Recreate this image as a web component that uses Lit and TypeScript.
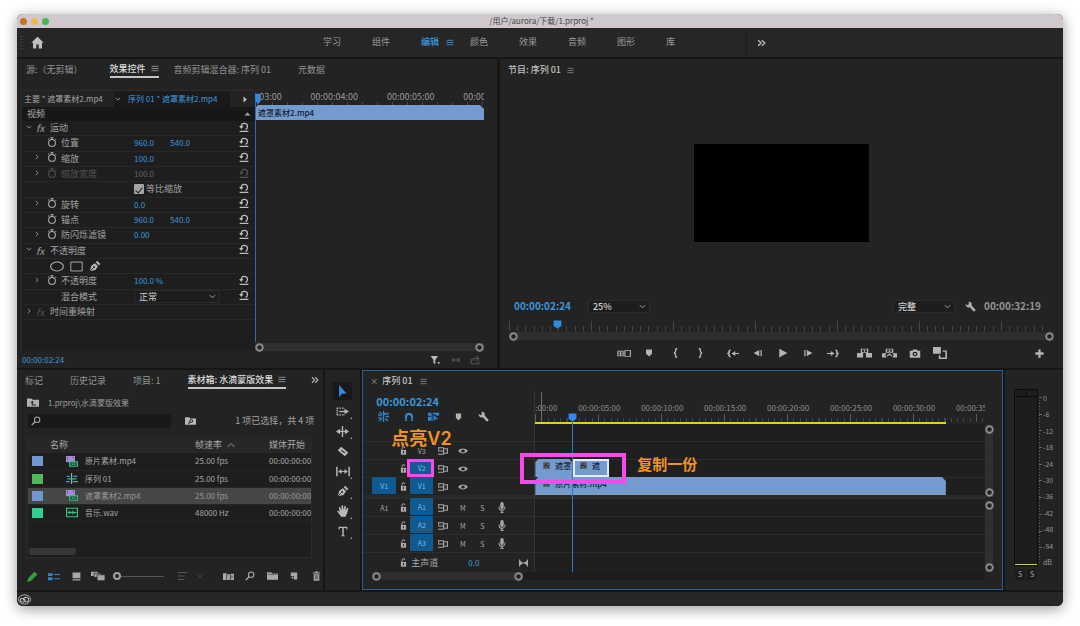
import { LitElement, html, svg, css, nothing } from "lit";
import { customElement } from "lit/decorators.js";
import { classMap } from "lit/directives/class-map.js";

/* ---------- icons ---------- */

const shapes: Record<string, any> = {
  home: svg`<path d="M8 1 .3 8.300h2.200V15.500h4v-5h3v5h4V8.300h2.200z" fill="currentColor"/>`,
  menu: svg`<path d="M1 3h14M1 8h14M1 13h14" stroke="currentColor" stroke-width="1.800"/>`,
  more: svg`<path d="M2 2.500 7.500 8 2 13.500M8.500 2.500 14 8l-5.500 5.500" fill="none" stroke="currentColor" stroke-width="2.200"/>`,
  down: svg`<path d="m2 5 6 6 6-6" fill="none" stroke="currentColor" stroke-width="2.200"/>`,
  up: svg`<path d="m1 12 7-7 7 7" fill="none" stroke="currentColor" stroke-width="1.800"/>`,
  right: svg`<path d="m5 2 6 6-6 6" fill="none" stroke="currentColor" stroke-width="2.200"/>`,
  triRight: svg`<path d="M4 1v14l9-7z" fill="currentColor"/>`,
  triUp: svg`<path d="M1 12h14L8 4z" fill="currentColor"/>`,
  watch: svg`<circle cx="8" cy="9.500" r="5.400" fill="none" stroke="currentColor" stroke-width="1.700"/><path d="M5.500 1.200h5M8 1.200V4M1.500 3.800l2-1.300M13 3l1.500 1.500" stroke="currentColor" stroke-width="1.600"/>`,
  reset: svg`<path d="M3.500 8C3.500 4 5.800 2.200 8.500 2.200S13.500 4 13.500 7c0 2-1 3.800-3 4.800M1 14.800h14" fill="none" stroke="currentColor" stroke-width="2"/><path d="M.2 6.300h7L3.600 11z" fill="currentColor"/>`,
  ellipse: svg`<ellipse cx="8" cy="8" rx="7.300" ry="6.500" fill="none" stroke="currentColor" stroke-width="1.200"/>`,
  rect: svg`<path d="M1 1.500h14v13H1z" fill="none" stroke="currentColor" stroke-width="1.200"/>`,
  pen: svg`<path d="m1 15 2-7.500 5-3.300 4 4-3.300 5zM9 3l2-2 4.200 4.200-2 2z" fill="currentColor"/><path d="m1.500 14.500 4.700-4.700" stroke="#1e1e1e" stroke-width="1.200"/><circle cx="6.800" cy="9.200" r="1.200" fill="#1e1e1e"/>`,
  filter: svg`<path d="M1 1.500h12L8.500 8v6.500L5.500 13V8zM12 11h4l-2 4z" fill="currentColor"/>`,
  playOnce: svg`<path d="M1 8h6M5 4.500 9 8l-4 3.500zM15 3v10M14 4l-4 4 4 4z" fill="currentColor" stroke="currentColor"/>`,
  exportIcon: svg`<path d="M2 6v8h12V9M5 9V5.500h7M10 2l4 3.500L10 9" fill="none" stroke="currentColor" stroke-width="1.700"/>`,
  wrench: svg`<path d="M1 4.500 3.800 6 5.800 4.500 5 1.200c3-.7 5.700 2 4.600 5.200l5.400 5.800c1.100 1.600-1.100 3.900-2.700 2.700L7 9C3.800 10.300.600 8 1 4.500z" fill="currentColor"/>`,
  compare: svg`<path d="M9 3h6.300v10H9z" fill="none" stroke="currentColor" stroke-width="1.300"/><path d="M1 3.600h6v8.800H1zM1 8h6M4 3v10" fill="none" stroke="currentColor" stroke-width="1.300"/>`,
  marker: svg`<path d="M2 1h12v8.500L8 15 2 9.500z" fill="currentColor"/>`,
  braceL: svg`<path d="M11 1C8.500 1 8 1.800 8 3.500V6L6 8l2 2v2.500c0 1.700.500 2.500 3 2.500" fill="none" stroke="currentColor" stroke-width="2.400"/>`,
  braceR: svg`<path d="M5 1c2.500 0 3 .8 3 2.500V6l2 2-2 2v2.500C8 14.200 7.500 15 5 15" fill="none" stroke="currentColor" stroke-width="2.400"/>`,
  goIn: svg`<path d="M5 2C3 2 2.800 3 2.800 4.500V6.500L1 8l1.800 1.500v2C2.800 13 3 14 5 14M9 8h7" fill="none" stroke="currentColor" stroke-width="2.200"/><path d="m6 8 5-4.500v9z" fill="currentColor"/>`,
  goOut: svg`<path d="M11 2c2 0 2.200 1 2.200 2.500V6.500L15 8l-1.800 1.500v2C13.200 13 13 14 11 14M0 8h7" fill="none" stroke="currentColor" stroke-width="2.200"/><path d="m10 8-5-4.500v9z" fill="currentColor"/>`,
  stepBack: svg`<path d="M10 3v10L1 8zM12 3h2v10h-2z" fill="currentColor"/>`,
  stepFwd: svg`<path d="M6 3v10l9-5zM2 3h2v10H2z" fill="currentColor"/>`,
  play: svg`<path d="M2 1v14L15 8z" fill="currentColor"/>`,
  lift: svg`<path d="M0 8h6.500v7H0zM9.500 8H16v7H9.500z" fill="currentColor"/><path d="M4.700 1.700h6.600v5.600H4.700zM8 3v3" fill="none" stroke="currentColor" stroke-width="1.400"/>`,
  extract: svg`<path d="M0 8.500h5L3.500 11.700 5 15H0zM16 8.500h-5l1.500 3.200L11 15h5z" fill="currentColor"/><path d="M4.700 1.700h6.600v5H4.700zM8 3v3M5.500 13 8 9.500l2.500 3.500" fill="none" stroke="currentColor" stroke-width="1.400"/>`,
  camera: svg`<path d="M1 4h3.500l1-2h5l1 2H15v10H1z" fill="currentColor"/><circle cx="8" cy="8.800" r="3.300" fill="#232323"/><circle cx="8" cy="8.800" r="1.600" fill="currentColor"/>`,
  proxy: svg`<path d="M0 0h9v9H0z" fill="currentColor"/><path d="M11 5.500h4V15H7.500v-4" fill="none" stroke="currentColor" stroke-width="1.800"/>`,
  plus: svg`<path d="M8 2v12M2 8h12" stroke="currentColor" stroke-width="3.400"/>`,
  folderUp: svg`<path d="M0 2h6l1.500 2H16v10H0z" fill="currentColor"/><path d="M12 11.500H7V8" fill="none" stroke="#232323" stroke-width="1.500"/><path d="m4.500 8.500 2.500-3 2.500 3z" fill="#232323"/>`,
  folderFind: svg`<path d="M0 2h6l1.500 2H16v10H0z" fill="currentColor"/><circle cx="9" cy="8" r="2.200" fill="none" stroke="#232323" stroke-width="1.400"/><path d="m7.500 9.700-2.700 2.500" stroke="#232323" stroke-width="1.500"/>`,
  folder: svg`<path d="M0 2h6l1.500 2H16v10H0z" fill="currentColor"/><path d="M1 5.300h14" stroke="#232323" stroke-width=".8"/>`,
  find: svg`<circle cx="9.800" cy="6" r="4.300" fill="none" stroke="currentColor" stroke-width="1.700"/><path d="M6.700 9.200 1.300 14.500" stroke="currentColor" stroke-width="2.200"/>`,
  clipAV: svg`<path d="M0 0h12v9H0z" fill="#a48bd8"/><path d="M1.500 1.500h1.200v1.200H1.500zM1.500 4h1.200v1.200H1.500zM9.300 1.500h1.200v1.200H9.300z" fill="#333"/><path d="M5 8.500h10.300V15H5z" fill="#16362a" stroke="#35c283" stroke-width="1.600"/><path d="M7 11.800h6.500M8.500 10.300v3M11.500 10.300v3" stroke="#35c283"/>`,
  seq: svg`<path d="M7.500 0v16" stroke="#b8b8b8" stroke-width="1.400"/><path d="M1 5h4M9.500 5H15M0 12.500h5" stroke="#4b9bd8" stroke-width="1.800"/><path d="M2 8.700h12M9 12.500h7" stroke="#35c283" stroke-width="1.800"/>`,
  wav: svg`<path d="M.8 1.800h14.400v12.400H.8z" fill="none" stroke="#35c283" stroke-width="1.600"/><path d="M2 8h12M4.500 5.500v5M6.500 6.500v3M9 5v6M11.500 6.500v3" stroke="#35c283" stroke-width="1.400"/>`,
  pencil: svg`<path d="m0 16 2-6L11 1l4 4-9 9z" fill="currentColor"/>`,
  list: svg`<path d="M0 2h6v5H0zM0 9.500h6v5H0z" fill="currentColor"/><path d="M8 4.500h8M8 12h8" stroke="currentColor" stroke-width="1.700"/>`,
  thumb: svg`<path d="M1 1h14v10H1zM1 12.800h14v2.200H1z" fill="currentColor"/>`,
  freeform: svg`<path d="M0 1h8v7H0z" fill="currentColor"/><path d="M3.500 3.500h8v7h-8z" fill="currentColor" stroke="#232323"/><path d="M7 6h9v9.500H7z" fill="currentColor" stroke="#232323"/>`,
  sort: svg`<path d="M1 2.500h14M1 8h11M1 13.500h9" stroke="currentColor" stroke-width="1.500"/>`,
  automate: svg`<path d="M0 2h5v12H0zM6 4h4v10H6zM11 3h5v11h-5z" fill="currentColor"/><path d="M12.500 6v5M14.500 6v5" stroke="#232323" stroke-width=".7"/>`,
  newItem: svg`<path d="M1.500 1h13v14H8V8.500H1.500z" fill="currentColor"/><path d="m2 10 4.800.2V15z" fill="currentColor"/>`,
  trash: svg`<path d="M3 5h10v10.500H3zM1.500 2.500h13v1.600h-13zM6 .5h4v2H6z" fill="currentColor"/><path d="M6 6.500v7M8 6.500v7M10 6.500v7" stroke="#232323" stroke-width=".8"/>`,
  arrow: svg`<path d="M3 0v16l4.500-4.500 6.500-.3z" fill="currentColor"/>`,
  trackSel: svg`<path d="M1 2h10M1 14h10M1.500 2v12" fill="none" stroke="currentColor" stroke-width="1.800" stroke-dasharray="2 1.200"/><path d="M4 8h8" stroke="currentColor" stroke-width="2.400"/><path d="M10.500 3 16 8l-5.500 5z" fill="currentColor"/>`,
  ripple: svg`<path d="M8 0v16" stroke="currentColor" stroke-width="1.700"/><path d="M1 8h14" stroke="currentColor" stroke-width="1.800"/><path d="M5 4 0 8l5 4zM11 4l5 4-5 4z" fill="currentColor"/>`,
  razor: svg`<path d="M5.500 1 15 9.500 10.500 15 1 6z" fill="currentColor"/><path d="m5.800 6 4.500 4" stroke="#232323" stroke-width="1.500"/>`,
  slip: svg`<path d="M1 1v14M15 1v14M3.500 8h9" stroke="currentColor" stroke-width="1.700"/><path d="M6.300 4.500 2.500 8l3.800 3.500zM9.700 4.500 13.500 8l-3.800 3.500z" fill="currentColor"/>`,
  hand: svg`<path d="M5.500 15.500C3.500 13 1.800 10.500.3 8.300c.8-1 1.900-.5 3.300 1L2.400 3c1-.9 1.900-.4 2.200.6L5.900 7 6 1c.8-1 1.900-.8 2.200.1l.3 5.600L10 1.300c1-.6 1.900-.1 1.900 1L11.200 7.400 13.400 4c1-.5 1.800.2 1.700 1.100-.9 3-1.600 7.400-3.700 10.400z" fill="currentColor"/>`,
  type: svg`<path d="M1 1h14v4h-1.600l-.5-2H9.200v10.500l2 .5V15H4.800v-1l2-.5V3H3.100l-.5 2H1z" fill="currentColor"/>`,
  nest: svg`<path d="M8 0v16M0 5l5 2M0 10h5M11 5l5-2M11 8h5M10.500 11l4 3.500M2 1.500 6 5M5.500 11 2 14.500M11 2.500l-2 3" stroke="currentColor" stroke-width="1.900"/>`,
  magnet: svg`<path d="M3.200 14.500V8c0-6.800 9.600-6.800 9.600 0v6.500" fill="none" stroke="currentColor" stroke-width="3.400"/><path d="M1 11.500h14" stroke="#232323" stroke-width=".9"/>`,
  linked: svg`<path d="M0 1h5v5H0zM6 1h10v5l-3-.5L6 2zM0 7.500h5V14H0zM6 4v10h1z" fill="currentColor"/><path d="M5.500 3v11" stroke="currentColor"/><path d="m7 4 8.500 7-4.300.4L8.500 15.500z" fill="currentColor" stroke="#232323" stroke-width=".7"/>`,
  lock: svg`<path d="M2 7h12v8.500H2z" fill="currentColor"/><path d="M4.500 7V4.500c0-4.200 6.500-4.200 6.500-.5" fill="none" stroke="currentColor" stroke-width="2"/><path d="M8 9v4" stroke="#232323" stroke-width="2"/>`,
  sync: svg`<path d="M0 1.500h9M0 8h9M0 14.500h9M9 1v14" fill="none" stroke="currentColor" stroke-width="1.900"/><path d="M1 1v6" stroke="currentColor" stroke-width="1.500"/><path d="M10 3.500h5v9h-5" fill="none" stroke="currentColor" stroke-width="1.900"/>`,
  eye: svg`<path d="M.2 8C4.200 1.500 11.800 1.500 15.800 8 11.800 14.500 4.200 14.500.2 8z" fill="currentColor"/><circle cx="8" cy="8" r="3" fill="#232323"/>`,
  mic: svg`<rect x="4.500" y="0" width="7" height="10.500" rx="3.500" fill="currentColor"/><path d="M2 6.500c0 7.500 12 7.500 12 0M8 12v3M5 15.200h6" fill="none" stroke="currentColor" stroke-width="1.900"/>`,
  bowtie: svg`<path d="M1 2v12l6-6zM15 2v12L9 8z" fill="currentColor"/><path d="M1 1v14M15 1v14M5 8h6" stroke="currentColor" stroke-width="1.800"/>`,
  badge: svg`<path d="M0 0h16v16H0z" fill="#5d6670"/><path d="m3 13 3-9h4M3.500 8H9M8 7l5 6M13 7l-5 6" fill="none" stroke="#222" stroke-width="1.700"/>`,
  head: svg`<path d="M1 1h14v9.500L8 15l-7-4.500z" fill="currentColor"/>`,
  knob: svg`<circle cx="8" cy="8" r="5.800" fill="#222" stroke="#8c8c8c" stroke-width="3.400"/>`,
  cloud: svg`<ellipse cx="8" cy="8" rx="7.400" ry="6.800" fill="none" stroke="currentColor" stroke-width="1.200"/><path d="M8 11.500H5.300C2 11.500 2 6.200 5.600 6.200c1.500 0 2.300 1.200 3.300 2.500M7 6.500c2-3 6.500-1.500 6.200 1.800C13 10.700 11.800 11.500 10.500 11.500 8.300 11.500 8 8 6 7.800" fill="none" stroke="currentColor" stroke-width="1.500"/>`,
};

const ic = (name: string, w = 10, h = w) =>
  html`<svg class="ic" width=${w} height=${h} viewBox="0 0 16 16" preserveAspectRatio="none" aria-hidden="true">${shapes[name]}</svg>`;

const btn = (label: string, name: string, w = 10, h = w, cls = "") =>
  html`<button class="ib ${cls}" aria-label=${label}>${ic(name, w, h)}</button>`;

const pick = (label: string, value: string) => html`
  <span class="pick">
    <select aria-label=${label}><option>${value}</option></select>
    ${ic("down", 7)}
  </span>`;

const tabs = (names: string[], active: number) => names.map((n, i) => html`
  <button class=${classMap({ tab: true, on: i === active })}>${n}${i === active ? ic("menu", 8, 7) : nothing}</button>`);

const base = css`
  * { box-sizing: border-box; }
  button, input, select {
    appearance: none; margin: 0; padding: 0; border: 0; background: none;
    color: inherit; font: inherit; text-align: left; outline-offset: 1px;
  }
  .ic { display: block; flex: none; }
  .ib { display: flex; align-items: center; justify-content: center; }
  .tabs { display: flex; gap: 15px; padding: 2px 8px 0 9px; height: 20px; flex: none; }
  .tab { display: flex; align-items: center; gap: 5px; padding-right: 12px; height: 17px; color: #959595; white-space: nowrap; }
  .tab.on { padding-right: 0; color: #dcdcdc; font-weight: 500; border-bottom: 2px solid #c4c4c4; }
  .tab.on .ic { color: #9a9a9a; }
  .pick { display: grid; align-items: center; height: 13px; background: #1d1d1d; border: 1px solid #2b2b2b; color: #cfcfcf; }
  .pick select, .pick .ic { grid-area: 1 / 1; }
  .pick select { width: 100%; height: 11px; line-height: 11px; padding-left: 4px; }
  .pick .ic { justify-self: end; margin-right: 3px; pointer-events: none; color: #a8a8a8; }
  .bar { display: flex; justify-content: space-between; align-items: center; height: 8px; background: #2f2f2f; }
  .blue { color: #3d97dc; }
`;

/* ---------- effect controls ---------- */

type Prop = { kind: string; label?: string; vals?: string[]; twirl?: boolean; off?: boolean };

const props: Prop[] = [
  { kind: "group", label: "运动" },
  { kind: "prop", label: "位置", vals: ["960.0", "540.0"] },
  { kind: "prop", label: "缩放", vals: ["100.0"], twirl: true },
  { kind: "prop", label: "缩放宽度", vals: ["100.0"], twirl: true, off: true },
  { kind: "check", label: "等比缩放" },
  { kind: "prop", label: "旋转", vals: ["0.0"], twirl: true },
  { kind: "prop", label: "锚点", vals: ["960.0", "540.0"] },
  { kind: "prop", label: "防闪烁滤镜", vals: ["0.00"], twirl: true },
  { kind: "group", label: "不透明度" },
  { kind: "mask" },
  { kind: "prop", label: "不透明度", vals: ["100.0 %"], twirl: true },
  { kind: "blend", label: "混合模式" },
  { kind: "closed", label: "时间重映射" },
];

@customElement("effect-controls")
export class EffectControls extends LitElement {
  static styles = [base, css`
    :host { display: flex; flex-direction: column; background: #232323; min-width: 0; }
    .tabs { height: 31px; }
    .main { flex: 1; display: grid; grid-template-columns: 234px minmax(0, 1fr); margin: 0 13px 0 4px; }
    .left { display: flex; flex-direction: column; background: #1e1e1e; border-left: 1px solid #2c2c2c; border-top: 1px solid #2c2c2c; }
    .src { display: flex; align-items: center; height: 16px; line-height: 16px; white-space: nowrap; background: #232323; font-size: 8px; }
    .src .a { width: 92px; padding-left: 2px; color: #a4a4a4; }
    .src .b { display: flex; align-items: center; gap: 7px; width: 116px; height: 16px; padding-left: 1px; background: #1a1a1a; }
    .src .c { margin-left: 12px; color: #c0c0c0; }
    .video { display: flex; justify-content: space-between; align-items: center; height: 14px; padding: 0 4px 0 5px; background: #171717; color: #aaa; }
    .rows { flex: 1; display: grid; grid-template-rows: repeat(15, minmax(15px, 1fr)); color: #a2a2a2; }
    .row { display: grid; grid-template-columns: 8px 12px 18px 73px minmax(0, 1fr) 20px; align-items: center; margin-right: 1px; margin-left: 1px; border-bottom: 1px solid #272727; }
    .row.top { grid-template-columns: 11px 15px minmax(0, 1fr) 20px; }
    .row > .ib { padding-bottom: 3px; }
    .row .rs { grid-column: -2; color: #bdbdbd; }
    .row .tw { grid-column: 2; }
    .row.top .tw { grid-column: 1; }
    .row .sw { grid-column: 3; color: #b0b0b0; }
    .row .lb { grid-column: 4; white-space: nowrap; }
    .row.top .lb { grid-column: 3; padding-left: 1px; }
    .row .vs { grid-column: 5; display: flex; align-items: center; }
    .fx { font-style: italic; font-size: 10px; line-height: 10px; text-align: left; padding-left: 2px; }
    .row .dim { color: #525252; }
    .num { width: 36px; font-size: 8px; line-height: 12px; height: 12px; color: #3d97dc; }
    .num.dim { color: #666; }
    .ck { display: flex; align-items: center; gap: 2px; white-space: nowrap; }
    .box { display: grid; place-items: center; width: 10px; height: 10px; background: #a4a4a4; border-radius: 1px; }
    .box::after { content: ""; width: 3px; height: 6px; border: solid #1c1c1c; border-width: 0 1px 1px 0; transform: rotate(40deg); }
    .masks { grid-column: 3 / 6; display: flex; gap: 6px; padding-left: 7px; color: #b5b5b5; }
    .pick { width: 86px; }
    .keys { position: relative; display: flex; flex-direction: column; min-width: 0; }
    .ruler { display: flex; height: 15px; overflow: hidden; color: #9a9a9a; white-space: nowrap; flex: none;
      background: repeating-linear-gradient(90deg, #4a4a4a 0 1px, transparent 1px 15px) 2px 12px / 100% 4px no-repeat; }
    .ruler span { flex: none; width: calc(100% / 3); text-align: center; line-height: 13px; }
    .ruler span:first-child { margin-left: calc(-100% / 6 + 3px); }
    .clip { height: 15px; line-height: 15px; padding-left: 3px; background: #739bd0; color: #15202e; font-size: 8px; font-weight: 500;
      clip-path: polygon(3px 0, calc(100% - 4px) 0, 100% 4px, 100% 100%, 0 100%, 0 3px); }
    .head { position: absolute; top: 3px; bottom: 9px; left: 0; width: 5px; color: #2f8ae0; border-left: 1px solid #2f6ca8; }
    .head .ic { margin-left: -1px; }
    .keys .bar { margin-top: auto; }
    .foot { display: flex; align-items: center; height: 17px; padding: 0 12px 0 5px; font-size: 8px; color: #b8b8b8; }
    .foot span { flex: 1; }
    .foot .ib { width: 20px; }
    .foot .dim { color: #555; }
  `];

  row(p: Prop) {
    const reset = btn("重置", "reset", 10, 10, p.off ? "rs dim" : "rs");
    switch (p.kind) {
      case "group":
        return html`<div class="row top">${btn("折叠", "down", 6, 6, "tw")}<span class="fx">fx</span><span class="lb">${p.label}</span>${reset}</div>`;
      case "closed":
        return html`<div class="row top">${btn("展开", "right", 6, 6, "tw")}<span class="fx dim">fx</span><span class="lb">${p.label}</span></div>`;
      case "check":
        return html`<div class="row"><label class="vs ck"><input class="box" type="checkbox" checked />${p.label}</label>${reset}</div>`;
      case "mask":
        return html`<div class="row"><span class="masks">${btn("椭圆蒙版", "ellipse", 14, 11)}${btn("矩形蒙版", "rect", 13, 11)}${btn("钢笔", "pen", 12)}</span></div>`;
      case "blend":
        return html`<div class="row"><span class="lb">${p.label}</span><span class="vs">${pick("混合模式", "正常")}</span>${reset}</div>`;
      default:
        return html`<div class="row">
          ${p.twirl ? btn("展开", "right", 6, 6, "tw") : nothing}
          ${btn("切换动画", "watch", 10, 10, p.off ? "sw dim" : "sw")}
          <span class=${classMap({ lb: true, dim: !!p.off })}>${p.label}</span>
          <span class="vs">${p.vals!.map((v) => html`<input class=${classMap({ num: true, dim: !!p.off })} aria-label=${p.label!} .value=${v} />`)}</span>
          ${reset}</div>`;
    }
  }

  render() {
    return html`
      <nav class="tabs">${tabs(["源:（无剪辑）", "效果控件", "音频剪辑混合器: 序列 01", "元数据"], 1)}</nav>
      <div class="main">
        <div class="left">
          <div class="src"><span class="a">主要 * 遮罩素材2.mp4</span><span class="b">${ic("down", 6)}<span class="blue">序列 01 * 遮罩素材2.mp4</span></span><span class="c">${ic("triRight", 6, 7)}</span></div>
          <div class="video">视频${ic("triUp", 7, 6)}</div>
          <div class="rows">${props.map((p) => this.row(p))}</div>
        </div>
        <div class="keys">
          <div class="ruler">${["00:00:03:00", "00:00:04:00", "00:00:05:00", "00:00:06:00"].map((t) => html`<span>${t}</span>`)}</div>
          <div class="clip">遮罩素材2.mp4</div>
          <div class="bar">${ic("knob", 9)}${ic("knob", 9)}</div>
          <div class="head">${ic("head", 6, 12)}</div>
        </div>
      </div>
      <div class="foot"><span class="blue">00:00:02:24</span>${btn("过滤", "filter")}${btn("播放", "playOnce", 10, 8, "dim")}${btn("导出", "exportIcon", 10, 10, "dim")}</div>
    `;
  }
}

/* ---------- program monitor ---------- */

@customElement("program-monitor")
export class ProgramMonitor extends LitElement {
  static styles = [base, css`
    :host { display: flex; flex-direction: column; background: #232323; min-width: 0; }
    .title { display: flex; align-items: center; gap: 6px; height: 22px; padding-left: 8px; color: #c0c0c0; font-weight: 500; }
    .title .ic { color: #8a8a8a; }
    .stage { flex: 1; display: grid; place-items: center; padding-top: 6px; }
    .frame { width: 31%; aspect-ratio: 16 / 9; background: #000; }
    .times { display: flex; align-items: center; height: 14px; padding: 0 22px 0 14px; font-size: 10px; font-weight: 700; white-space: nowrap; }
    .times .pick { width: 62px; font-size: 9px; font-weight: 500; }
    .times .zoom { margin-left: 17px; }
    .times .full { margin-left: auto; }
    .times .ib { margin: 0 8px 0 10px; color: #b0b0b0; }
    .total { color: #949494; }
    .scrub { position: relative; margin: 8px 9px 0; }
    .ticks { height: 10px; margin-right: 4px;
      background:
        repeating-linear-gradient(90deg, #484848 0 1px, transparent 1px 15.15%) 0 0 / 100% 10px no-repeat,
        repeating-linear-gradient(90deg, #444 0 1px, transparent 1px 1.515%) 0 5px / 100% 5px no-repeat; }
    .head { position: absolute; left: 8%; top: -1px; color: #2f8ae0; }
    .bar { margin: 1px 0 0; }
    .ctl { display: grid; grid-template-columns: minmax(0, 1fr) auto minmax(0, 1fr); align-items: center; height: 26px; color: #b4b4b4; margin-bottom: 2px; }
    .set { grid-column: 2; display: flex; }
    .set .ib { width: 25px; height: 20px; }
    .set .near { margin-left: 2px; }
    .set .far { margin-left: 7px; }
    .add { justify-self: end; margin-right: 18px; }
  `];
  render() {
    return html`
      <div class="title">节目: 序列 01 ${ic("menu", 7)}</div>
      <div class="stage"><div class="frame"></div></div>
      <div class="times">
        <span class="blue">00:00:02:24</span>
        <span class="zoom">${pick("缩放级别", "25%")}</span>
        <span class="full">${pick("回放分辨率", "完整")}</span>
        ${btn("设置", "wrench", 11)}
        <span class="total">00:00:32:19</span>
      </div>
      <div class="scrub">
        <div class="ticks"></div>
        <div class="bar">${ic("knob", 9)}${ic("knob", 9)}</div>
        <div class="head">${ic("head", 9)}</div>
      </div>
      <div class="ctl">
        <div class="set">
          ${btn("比较视图", "compare", 14, 9)}${btn("标记", "marker", 8, 8)}
          ${btn("入点", "braceL", 9, 10, "near")}${btn("出点", "braceR", 9, 10)}
          ${btn("转到入点", "goIn", 12, 9, "far")}${btn("后退一帧", "stepBack")}${btn("播放", "play")}${btn("前进一帧", "stepFwd")}${btn("转到出点", "goOut", 12, 9)}
          ${btn("提升", "lift", 15, 10, "far")}${btn("提取", "extract", 15, 10)}${btn("导出帧", "camera", 12, 11)}${btn("切换代理", "proxy", 14, 12)}
        </div>
        ${btn("按钮编辑器", "plus", 11, 11, "add")}
      </div>
    `;
  }
}

/* ---------- media bin ---------- */

const media = [
  { c: "#7098cf", i: "clipAV", n: "原片素材.mp4", r: "25.00 fps" },
  { c: "#4fb858", i: "seq", n: "序列 01", r: "25.00 fps" },
  { c: "#7098cf", i: "clipAV", n: "遮罩素材2.mp4", r: "25.00 fps", sel: true },
  { c: "#33cf92", i: "wav", n: "音乐.wav", r: "48000 Hz" },
];

@customElement("media-bin")
export class MediaBin extends LitElement {
  static styles = [base, css`
    :host { display: flex; flex-direction: column; background: #232323; min-width: 0; }
    .top { display: flex; justify-content: space-between; align-items: center; padding-right: 4px; color: #b4b4b4; }
    .tabs { height: 20px; padding: 2px 0 0 8px; }
    .path { display: flex; align-items: center; gap: 9px; height: 22px; padding: 3px 0 0 10px; color: #9c9c9c; font-size: 8px; }
    .path .ic { color: #b0b0b0; }
    .find { display: flex; align-items: center; height: 18px; margin: 0 9px 0 11px; color: #a2a2a2; }
    .field { display: flex; align-items: center; gap: 4px; width: 50%; height: 14px; padding-left: 3px; background: #181818; border-radius: 2px; }
    .field input { flex: 1; min-width: 0; height: 12px; }
    .find .ib { margin-left: 14px; color: #b8b8b8; }
    .find .n { margin-left: auto; white-space: nowrap; }
    .table { flex: 1; display: flex; flex-direction: column; margin: 7px 11px 0 10px; background: #1e1e1e; border: 1px solid #2a2a2a; border-top: 0; }
    table { border-collapse: collapse; table-layout: fixed; width: 100%; color: #a6a6a6; }
    th { height: 16px; padding: 0; background: #272727; text-align: left; font-weight: 400; }
    td { height: 17px; padding: 0; border-bottom: 1px solid #262626; white-space: nowrap; font-size: 8px; }
    th .ic { display: inline-block; vertical-align: -1px; margin-left: 5px; }
    .c1 { width: 38px; } .c2 { width: 19px; } .c3 { width: 110px; } .c4 { width: 74px; }
    .c2h { padding-left: 22px; }
    .sw { width: 11px; height: 10px; margin-left: 4px; }
    .sel td { background: #464646; color: #989898; }
    .hs { width: 47px; height: 7px; margin: auto 0 2px 1px; border-radius: 3px; background: #373737; }
    .tools { display: flex; align-items: center; height: 32px; padding: 4px 0 0 10px; color: #a8a8a8; }
    .tools .ib { width: 22px; flex: none; }
    .tools .ib:first-child { width: 11px; margin-right: 5px; color: #35a03d; }
    .tools .blue { color: #2f86d0; }
    .tools .dim { width: 17px; color: #555; }
    .tools .last { margin-left: 9px; }
    input[type="range"] { width: 51px; height: 9px; margin: 0 10px 0 4px; background: linear-gradient(#555, #555) center / 100% 1px no-repeat; }
    input[type="range"]::-webkit-slider-thumb { appearance: none; width: 8px; height: 8px; border: 2px solid #a0a0a0; border-radius: 50%; background: #232323; }
  `];
  render() {
    return html`
      <div class="top"><nav class="tabs">${tabs(["标记", "历史记录", "项目: 1", "素材箱: 水滴蒙版效果"], 3)}</nav>${btn("更多", "more", 8, 8)}</div>
      <div class="path">${ic("folderUp", 12, 11)}1.prproj\\水滴蒙版效果</div>
      <div class="find">
        <label class="field">${ic("find", 10)}<input type="text" aria-label="搜索" /></label>
        ${btn("搜索素材箱", "folderFind", 11, 10)}
        <span class="n">1 项已选择，共 4 项</span>
      </div>
      <div class="table">
        <table>
          <colgroup><col class="c1" /><col class="c2" /><col class="c3" /><col class="c4" /><col /></colgroup>
          <thead><tr><th colspan="3" class="c2h">名称</th><th>帧速率${ic("up", 8, 8)}</th><th>媒体开始</th></tr></thead>
          <tbody>${media.map((m) => html`
            <tr class=${classMap({ sel: !!m.sel })}>
              <td><div class="sw" style="background:${m.c}"></div></td><td>${ic(m.i, 12, 11)}</td>
              <td>${m.n}</td><td>${m.r}</td><td>00:00:00:00</td>
            </tr>`)}</tbody>
        </table>
        <div class="hs"></div>
      </div>
      <div class="tools">
        ${btn("可写", "pencil", 11)}${btn("列表视图", "list", 12, 9, "blue")}${btn("图标视图", "thumb", 9, 9)}${btn("自由变换视图", "freeform", 14, 10)}
        <input type="range" aria-label="图标大小" value="0" />
        ${btn("排序", "sort", 11, 10, "dim")}${btn("排序选项", "down", 6, 6, "dim")}
        ${btn("自动匹配序列", "automate", 11, 9, "last")}${btn("查找", "find", 10)}${btn("新建素材箱", "folder", 11, 10)}${btn("新建项", "newItem", 8, 8)}${btn("清除", "trash", 9, 10)}
      </div>
    `;
  }
}

/* ---------- timeline ---------- */

@customElement("time-line")
export class TimeLine extends LitElement {
  static styles = [base, css`
    :host { position: relative; display: flex; flex-direction: column; background: #232323; border: 1px solid #2b5c92; min-width: 0; }
    .title { display: flex; align-items: center; height: 20px; padding-left: 7px; color: #c6c6c6; font-weight: 500; }
    .title .x { width: 12px; font-size: 8px; color: #888; }
    .title .ic { margin-left: 7px; color: #8a8a8a; }
    .body { flex: 1; display: grid; grid-template-columns: 171px minmax(0, 1fr) 17px; }
    .heads, .lanes { display: grid; grid-template-rows: 33px minmax(17px, 1fr) repeat(3, 18px) 3px repeat(3, 18px) 20px; }
    .info { padding-left: 13px; }
    .tc { font-size: 11px; font-weight: 700; line-height: 20px; }
    .opts { display: flex; margin-left: -5px; color: #b4b4b4; }
    .opts .ib { width: 25px; height: 11px; }
    .opts .blue { color: #2f86d0; }
    .trk { display: grid; grid-template-columns: 24px 14px 23px 20px 19px 20px 20px; align-items: center; padding-left: 9px; border-top: 1px solid #2d2d2d; color: #a8a8a8; font-size: 7px; }
    .trk .ib { height: 100%; }
    .trk .on { background: #0f5a90; color: #7cb9e8; align-self: stretch; margin-top: -1px; }
    .gap { background: #2a2a2a; }
    .master { font-size: 9px; }
    .master .name { grid-column: 3 / 5; white-space: nowrap; padding-left: 1px; }
    .master .v { grid-column: 6; width: 20px; margin-left: -4px; font-size: 8px; color: #3d97dc; }
    .master .w { grid-column: 7 / 9; margin-left: 27px; }
    .lanes { position: relative; min-width: 0; border-left: 1px solid #353535; background: #1f1f1f; }
    .ruler { display: grid; grid-template-rows: 23px 8px 2px; overflow: hidden; background: #232323; }
    .marks { display: flex; overflow: hidden; font-size: 8px; color: #8e8e8e; }
    .marks span { flex: none; width: 14%; text-align: center; line-height: 34px; }
    .marks span:first-child { margin-left: calc(-7% + 1px); }
    .ticks { background:
        repeating-linear-gradient(90deg, #585858 0 1px, transparent 1px 14%) 0 0 / 100% 8px no-repeat,
        repeating-linear-gradient(90deg, #444 0 1px, transparent 1px 1.4%) 0 4px / 100% 4px no-repeat; }
    .work { width: 91.3%; background: #ddd31d; }
    .lane { display: flex; border-top: 1px solid #2d2d2d; min-width: 0; }
    .clip { display: flex; align-items: flex-start; gap: 5px; overflow: hidden; margin-top: -1px; padding: 2px 0 0 8px; background: #739bd0; color: #15202e; font-size: 8px; font-weight: 500; line-height: 10px; white-space: nowrap;
      clip-path: polygon(3px 0, calc(100% - 4px) 0, 100% 4px, 100% 100%, 0 100%, 0 3px); }
    .clip .ic { margin-top: 1px; }
    .clip.pk { border: 2px solid #e8ecf2; padding: 0 0 0 5px; clip-path: none; }
    .v1 .clip { border-bottom: 1px solid #8c99ab; }
    .play { position: absolute; left: 8.2%; top: 22px; bottom: 0; width: 1px; background: #2f78bd; }
    .play .ic { margin-left: -4px; color: #2f8ae0; }
    .cursor { position: absolute; left: 6px; top: 1px; height: 30px; width: 1px; background: #6a6a6a; }
    .vs { display: flex; flex-direction: column; padding: 34px 0 0; gap: 4px; width: 8px; }
    .vbar { flex: 1; display: flex; flex-direction: column; justify-content: space-between; align-items: center; background: #2f2f2f; }
    .hrow { display: grid; grid-template-columns: 151px minmax(0, 1fr); margin: 0 17px 9px 9px; background: #1d1d1d; }
    .note { position: absolute; z-index: 2; font: 700 15px/20px "Noto Sans CJK SC", sans-serif; color: #f0941f; white-space: nowrap; }
    .n1 { left: 28px; top: 58px; font-size: 18px; font-weight: 600; font-family: Inter, "Noto Sans CJK SC", sans-serif; }
    .n2 { left: 274px; top: 83px; }
    .ring { position: absolute; z-index: 2; border: 3px solid #f64be8; }
    .r1 { left: 44px; top: 88px; width: 27px; height: 18px; }
    .r2 { left: 157px; top: 82px; width: 106px; height: 31px; border-width: 4px; }
  `];
  video(n: string, patch = false, on = false) {
    return html`<div class="trk">
      ${patch ? html`<button class="ib on">V1</button>` : html`<span></span>`}
      ${btn("锁定", "lock", 7, 9)}<button class="ib ${on ? "on" : ""}">${n}</button>
      ${btn("同步锁定", "sync", 10, 8)}${btn("显示", "eye", 10, 8)}</div>`;
  }
  audio(n: string, patch = false) {
    return html`<div class="trk">
      ${patch ? html`<button class="ib">A1</button>` : html`<span></span>`}
      ${btn("锁定", "lock", 7, 9)}<button class="ib on">${n}</button>
      ${btn("同步锁定", "sync", 10, 8)}<button class="ib">M</button><button class="ib">S</button>${btn("画外音", "mic", 8, 11)}</div>`;
  }
  render() {
    const t = ["00", "05", "10", "15", "20", "25", "30", "35"];
    return html`
      <div class="title"><button class="x" aria-label="关闭">×</button>序列 01${ic("menu", 7)}</div>
      <div class="body">
        <div class="heads">
          <div class="info">
            <div class="tc blue">00:00:02:24</div>
            <div class="opts">${btn("嵌套", "nest", 11, 11, "blue")}${btn("对齐", "magnet", 10, 10, "blue")}${btn("链接选择", "linked", 11, 10, "blue")}${btn("添加标记", "marker", 7, 8)}${btn("设置", "wrench", 11)}</div>
          </div>
          <div></div>
          ${this.video("V3")}${this.video("V2", false, true)}${this.video("V1", true, true)}
          <div class="gap"></div>
          ${this.audio("A1", true)}${this.audio("A2")}${this.audio("A3")}
          <div class="trk master"><span></span>${btn("锁定", "lock", 7, 9)}<span class="name">主声道</span><input class="v" aria-label="主声道音量" value="0.0" /><span class="w">${ic("bowtie", 9, 8)}</span></div>
        </div>
        <div class="lanes">
          <div class="ruler">
            <div class="marks">${t.map((s) => html`<span>00:00:${s}:00</span>`)}</div>
            <div class="ticks"></div><div class="work"></div>
          </div>
          <div></div>
          <div class="lane"></div>
          <div class="lane">
            <div class="clip" style="width:8.4%">${ic("badge", 7)}遮罩</div>
            <div class="clip pk" style="width:8%">${ic("badge", 7)}遮</div>
          </div>
          <div class="lane v1"><div class="clip" style="width:91.3%">${ic("badge", 7)}原片素材.mp4</div></div>
          <div class="gap"></div>
          <div class="lane"></div><div class="lane"></div><div class="lane"></div><div class="lane"></div>
          <div class="cursor"></div>
          <div class="play">${ic("head", 9, 9)}</div>
        </div>
        <div class="vs"><div class="vbar">${ic("knob", 9)}${ic("knob", 9)}</div><div class="vbar">${ic("knob", 9)}${ic("knob", 9)}</div></div>
      </div>
      <div class="hrow"><div class="bar">${ic("knob", 9)}${ic("knob", 9)}</div></div>
      <div class="ring r1"></div><div class="ring r2"></div>
      <div class="note n1">点亮V2</div><div class="note n2">复制一份</div>
    `;
  }
}

/* ---------- application window ---------- */

@customElement("app-root")
export class AppRoot extends LitElement {
  static styles = [base, css`
    :host { display: flex; box-sizing: border-box; min-height: 100vh; padding: 14px 17px 20px; background: #fff;
      font: 400 9px/12px "Noto Sans CJK SC", "Noto Sans", sans-serif; color: #a8a8a8; }
    .win { flex: 1; min-width: 0; display: flex; flex-direction: column; overflow: hidden; border-radius: 6px; background: #161616; box-shadow: 0 3px 14px rgba(0, 0, 0, 0.4); }
    .cap { display: grid; grid-template-columns: minmax(0, 1fr) auto minmax(0, 1fr); align-items: center; height: 14px; padding-left: 3px; background: #cfc8ce; color: #444; font-size: 8px; line-height: 10px; }
    .dots { display: flex; gap: 4px; }
    .dot { width: 7px; height: 7px; border-radius: 50%; }
    .ws { display: flex; align-items: center; height: 29px; background: #262626; }
    .grip { width: 3px; height: 14px; margin-left: 3px; background: repeating-linear-gradient(#3a3a3a 0 1px, transparent 1px 3px); }
    .home { width: 28px; color: #c0c0c0; }
    .spaces { display: flex; margin-left: 272px; }
    .spaces button { display: flex; align-items: center; gap: 7px; width: 49px; height: 20px; padding-bottom: 1px; color: #9a9a9a; }
    .spaces .cur { color: #3d97dc; font-weight: 500; }
    .ovf { height: 29px; margin-left: 31px; padding-left: 10px; border-left: 1px solid #1e1e1e; color: #c4c4c4; }
    .upper { flex: 310 1 0; display: grid; grid-template-columns: minmax(0, 480fr) minmax(0, 563fr); gap: 3px; margin-top: 2px; }
    .lower { flex: 219 1 0; display: grid; grid-template-columns: minmax(0, 306fr) 35px minmax(0, 640fr) 58px; gap: 2px; margin: 2px 0; }
    .tool { display: flex; flex-direction: column; align-items: center; gap: 2px; padding-top: 12px; background: #232323; color: #b8b8b8; }
    .tool .ib { position: relative; width: 19px; height: 18px; }
    .tool .sel { background: #181818; color: #2f8ae0; }
    .tool .sub::after { content: ""; position: absolute; right: 0; bottom: 1px; border: solid transparent; border-width: 2px 0 0 2px; border-bottom: 2px solid #999; }
    .meter { display: grid; grid-template-columns: 24px 4px minmax(0, 1fr); grid-template-rows: minmax(0, 1fr) 16px; padding: 19px 0 8px 9px; background: #232323; font-size: 7px; line-height: 8px; }
    .well { display: grid; grid-template-columns: 1fr 1fr; grid-template-rows: 7px 1fr; border: 1px solid #0c0c0c; background: #1d1d1d; }
    .well i { border-bottom: 1px solid #0c0c0c; }
    .well i:nth-child(2) { border-left: 1px solid #0c0c0c; }
    .well b { grid-column: 1 / 3; border-bottom: 1px solid #cfcf60; }
    .scale { margin: 8px 0 2px; background:
        repeating-linear-gradient(#666 0 1px, transparent 1px 10%) 1px 0 / 3px 100% no-repeat,
        repeating-linear-gradient(#5c5c5c 0 1px, transparent 1px 3px) 1px 0 / 1px 100% no-repeat; }
    .db { display: flex; flex-direction: column; justify-content: space-between; margin: 5px 0 0; padding-left: 1px; color: #959595; }
    .solo { display: flex; justify-content: space-around; align-items: center; }
    .solo button { width: 10px; height: 11px; background: #1c1c1c; text-align: center; }
    .status { display: flex; align-items: center; height: 14px; padding-left: 1px; background: #262626; color: #bdbdbd; }
  `];
  render() {
    const spaces = ["学习", "组件", "编辑", "颜色", "效果", "音频", "图形", "库"];
    const scale = ["0", "-6", "-12", "-18", "-24", "-30", "-36", "-42", "-48", "-54", "dB"];
    return html`
      <div class="win">
        <header class="cap">
          <div class="dots">${["#c9731f", "#efb84f", "#47b950"].map((c) => html`<span class="dot" style="background:${c}"></span>`)}</div>
          <span>/用户/aurora/下载/1.prproj *</span>
        </header>
        <div class="ws">
          <div class="grip"></div>${btn("主页", "home", 13, 13, "home")}
          <nav class="spaces">${spaces.map((s, i) => html`<button class=${i === 2 ? "cur" : ""}>${s}${i === 2 ? ic("menu", 8, 7) : nothing}</button>`)}</nav>
          ${btn("更多", "more", 9, 8, "ovf")}
        </div>
        <div class="upper"><effect-controls></effect-controls><program-monitor></program-monitor></div>
        <div class="lower">
          <media-bin></media-bin>
          <div class="tool">
            ${btn("选择工具", "arrow", 11, 12, "sel")}${btn("向前选择轨道", "trackSel", 13, 9, "sub")}${btn("波纹编辑", "ripple", 13, 11, "sub")}${btn("剃刀", "razor", 12, 11)}
            ${btn("外滑", "slip", 14, 11, "sub")}${btn("钢笔", "pen", 12, 12, "sub")}${btn("手形", "hand", 12, 12, "sub")}${btn("文字", "type", 10, 11, "sub")}
          </div>
          <time-line></time-line>
          <div class="meter">
            <div class="well"><i></i><i></i><b></b></div>
            <div class="scale"></div>
            <div class="db">${scale.map((s) => html`<span>${s}</span>`)}</div>
            <div class="solo"><button>S</button><button>S</button></div>
          </div>
        </div>
        <footer class="status">${ic("cloud", 13, 11)}</footer>
      </div>
    `;
  }
}
